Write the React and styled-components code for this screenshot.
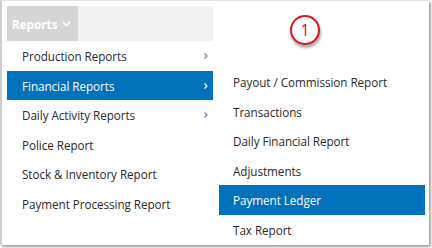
import React from 'react'
import styled, { createGlobalStyle } from 'styled-components'

const Global = createGlobalStyle`
  body {
    margin: 0;
    background: #fff;
    font-family: "Open Sans", "Liberation Sans", sans-serif;
  }
`

const Frame = styled.div`
  width: 432px;
  height: 248px;
  background: #fff;
`

const Shot = styled.div`
  box-sizing: border-box;
  width: 429px;
  height: 245px;
  border-top: 1px solid #e2e2e2;
  border-left: 2px solid #cfcfcf;
  box-shadow: 2px 2px 2px rgba(0, 0, 0, 0.35);
  display: flex;
  gap: 6px;
  padding-left: 5px;
  padding-top: 5px;
  background: #fff;
`

const Column = styled.div`
  width: 206px;
  display: flex;
  flex-direction: column;
`

const Header = styled.div`
  height: 35px;
  background: #f2f2f2;
  display: flex;
`

const HeaderButton = styled.div`
  width: 71px;
  background: #d5d5d5;
  color: #fff;
  font-weight: 700;
  font-size: 11.7px;
  display: flex;
  align-items: center;
  gap: 5px;
  padding-left: 5px;
  box-sizing: border-box;
`

const Item = styled.div`
  height: 29.5px;
  display: flex;
  align-items: center;
  justify-content: space-between;
  padding: 1px 4px 0 15px;
  box-sizing: border-box;
  font-size: 11.7px;
  letter-spacing: -0.05px;
  color: ${p => (p.$active ? '#fff' : '#2a2a2a')};
  background: ${p => (p.$active ? '#0071bb' : 'transparent')};
  white-space: nowrap;
`

const SubItem = styled(Item)`
  padding-left: 14px;
`

const BadgeRow = styled.div`
  height: 61px;
  padding-left: 71px;
  padding-top: 9px;
  box-sizing: border-box;
`

const Badge = styled.div`
  width: 30px;
  height: 30px;
  box-sizing: border-box;
  border-radius: 50%;
  border: 2px solid #e0141b;
  background: #fff;
  color: #d0151b;
  font-size: 16px;
  display: flex;
  align-items: center;
  justify-content: center;
  box-shadow: 1px 3px 3px rgba(0, 0, 0, 0.35);
`

const Chevron = ({ color }) => (
  <svg width="6" height="8" viewBox="0 0 6 8">
    <polyline points="1.5,1.5 4,4 1.5,6.5" fill="none" stroke={color} strokeWidth="1.3" />
  </svg>
)

const Caret = () => (
  <svg width="9" height="6" viewBox="0 0 9 6">
    <polyline points="1,1 4.5,4.5 8,1" fill="none" stroke="#fff" strokeWidth="1.6" />
  </svg>
)

const menu = [
  { label: 'Production Reports', sub: true },
  { label: 'Financial Reports', sub: true, active: true },
  { label: 'Daily Activity Reports', sub: true },
  { label: 'Police Report' },
  { label: 'Stock & Inventory Report' },
  { label: 'Payment Processing Report' },
]

const subMenu = [
  'Payout / Commission Report',
  'Transactions',
  'Daily Financial Report',
  'Adjustments',
  'Payment Ledger',
  'Tax Report',
]

export default function App() {
  return (
    <Frame>
      <Global />
      <Shot>
        <Column>
          <Header>
            <HeaderButton>
              Reports <Caret />
            </HeaderButton>
          </Header>
          {menu.map(m => (
            <Item key={m.label} $active={m.active}>
              <span>{m.label}</span>
              {m.sub && <Chevron color={m.active ? '#fff' : '#6f8db0'} />}
            </Item>
          ))}
        </Column>
        <Column>
          <BadgeRow>
            <Badge>1</Badge>
          </BadgeRow>
          {subMenu.map(s => (
            <SubItem key={s} $active={s === 'Payment Ledger'}>
              {s}
            </SubItem>
          ))}
        </Column>
      </Shot>
    </Frame>
  )
}
